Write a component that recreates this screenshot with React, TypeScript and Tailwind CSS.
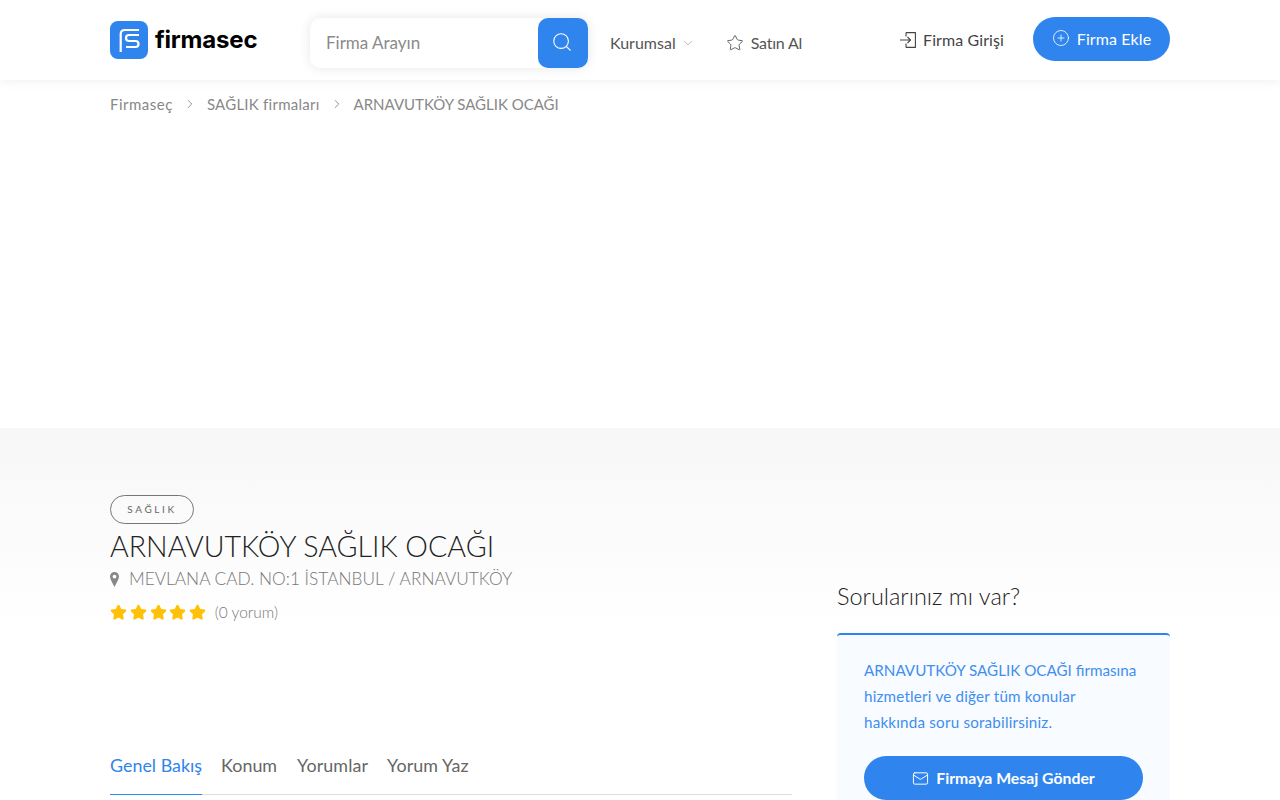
import { ChevronDown, ChevronRight, Mail, Search, Star, CirclePlus } from 'lucide-react';

const font = "font-['Lato','Open_Sans',sans-serif]";

function Logo() {
  return (
    <div className="flex w-[148px] shrink-0 items-center gap-[7px]">
      <div className="flex h-[38px] w-[38px] shrink-0 items-center justify-center rounded-[8px] bg-[#2f84ee]">
        <svg width="26" height="30" viewBox="0 0 26 30" fill="none" stroke="white" strokeWidth="2.2">
          <path d="M4.7 27V9C4.7 6.5 6.5 5 9 5H23" />
          <path d="M23 10H13C11 10 10 11.5 10 13C10 15 11 16 13 16H19.5C21.5 16 22.5 17.5 22.5 19C22.5 20.5 21.5 22 19.5 22H10" />
        </svg>
      </div>
      <span className="font-['Inter',sans-serif] text-[24px] font-bold leading-none tracking-[-0.2px] text-black">firmasec</span>
    </div>
  );
}

function Header() {
  return (
    <header className="relative z-10 h-20 bg-white shadow-[0_2px_10px_rgba(0,0,0,0.06)]">
      <div className="mx-auto flex h-full w-[1060px] items-center">
        <Logo />
        <div className="ml-[52px] mt-[6px] flex h-[50px] w-[278px] items-center rounded-[10px] bg-white shadow-[0_0_12px_rgba(0,0,0,0.1)]">
          <span className="flex-1 pl-4 text-[17px] text-[#8a8a8a]">Firma Arayın</span>
          <button className="flex h-[50px] w-[50px] items-center justify-center rounded-[10px] bg-[#2f84ee] pb-[3px] pr-[3px] text-white">
            <Search size={22} strokeWidth={1.2} />
          </button>
        </div>
        <nav className="ml-[22px] mt-[6px] flex items-center text-[16px] text-[#555]">
          <span>Kurumsal</span>
          <ChevronDown size={14} strokeWidth={1.2} className="ml-[5px] text-[#999]" />
          <Star size={18} strokeWidth={1.2} className="ml-[31px]" />
          <span className="ml-[7px] tracking-[-0.2px]">Satın Al</span>
        </nav>
        <div className="ml-auto flex items-center text-[#444]">
          <div className="flex items-center gap-[7px] text-[16px] tracking-[0.1px]">
            <svg width="16" height="16" viewBox="0 0 16 16" fill="none" stroke="currentColor" strokeWidth="1.1">
              <path d="M6 .6H15.4V15.4H6M6 4.5V.6M6 15.4V11.5M0 8H10.5M7.5 5L10.5 8L7.5 11" />
            </svg>
            <span>Firma Girişi</span>
          </div>
          <button className="mb-[2px] ml-[29px] flex h-11 w-[137px] items-center justify-center gap-[7px] rounded-[22px] bg-[#2f84ee] text-[16px] tracking-[0.1px] text-white">
            <CirclePlus size={18} strokeWidth={1.1} className="mb-[3px]" />
            Firma Ekle
          </button>
        </div>
      </div>
    </header>
  );
}

function Breadcrumb() {
  return (
    <div className="mx-auto flex h-12 w-[1060px] items-center text-[15px] text-[#888]">
      <span className="tracking-[0.5px]">Firmaseç</span>
      <ChevronRight size={14} strokeWidth={1.2} className="mx-[10px] text-[#666]" />
      <span className="tracking-[0.25px]">SAĞLIK firmaları</span>
      <ChevronRight size={14} strokeWidth={1.2} className="mx-[10px] text-[#666]" />
      <span>ARNAVUTKÖY SAĞLIK OCAĞI</span>
    </div>
  );
}

function CompanyInfo() {
  return (
    <div className="w-[682px] pt-[67px]">
      <span className="flex h-[29px] w-[84px] items-center justify-center rounded-[15px] border border-[#777] text-[10px] tracking-[2.6px] text-[#666]">SAĞLIK</span>
      <h1 className="mt-[5px] text-[28.6px] font-light leading-[34px] text-[#222]">ARNAVUTKÖY SAĞLIK OCAĞI</h1>
      <div className="mt-[2px] flex h-[28px] items-center text-[17.3px] font-light text-[#777]">
        <svg width="9" height="15" viewBox="0 0 9 15" className="mr-[10px]" fill="#888">
          <path fillRule="evenodd" d="M4.5 0C2 0 0 2 0 4.5C0 7 3 12 4.5 15C6 12 9 7 9 4.5C9 2 7 0 4.5 0ZM4.5 2.7A1.9 1.9 0 1 1 4.5 6.5A1.9 1.9 0 1 1 4.5 2.7Z" />
        </svg>
        <span>MEVLANA CAD. NO:1 İSTANBUL / ARNAVUTKÖY</span>
      </div>
      <div className="mt-[8px] flex items-center">
        {[0, 1, 2, 3, 4].map(i => (
          <Star key={i} size={17} fill="#ffc107" stroke="#ffc107" className="mr-[2.75px]" />
        ))}
        <span className="ml-[6px] text-[15.5px] font-light text-[#777]">(0 yorum)</span>
      </div>
      <div className="mt-[125px] flex border-b border-[#ddd] text-[17.9px] text-[#666]">
        <span className="-mb-px h-[46px] border-b border-[#2f84ee] pt-[4px] leading-[24px] text-[#2f84ee]">Genel Bakış</span>
        <span className="ml-[19px] pt-[4px] leading-[24px]">Konum</span>
        <span className="ml-[20px] pt-[4px] leading-[24px] tracking-[0.1px]">Yorumlar</span>
        <span className="ml-[19px] pt-[4px] leading-[24px] tracking-[0.1px]">Yorum Yaz</span>
      </div>
    </div>
  );
}

function QuestionCard() {
  return (
    <aside className="w-[333px] pt-[153px]">
      <h2 className="text-[23.5px] font-light leading-[30px] text-[#222]">Sorularınız mı var?</h2>
      <div className="mt-[22px] h-[300px] rounded-t-[4px] border-t-2 border-[#2f84ee] bg-[#f8fbff] px-[27px] pt-[22px]">
        <p className="text-[15.2px] leading-[26px] text-[#3f8ef0]">
          ARNAVUTKÖY SAĞLIK OCAĞI firmasına<br />
          <span className="tracking-[0.2px]">hizmetleri ve diğer tüm konular<br />hakkında soru sorabilirsiniz.</span>
        </p>
        <button className="mt-[21px] flex h-11 w-full items-center justify-center gap-[7px] rounded-[22px] bg-[#2f84ee] text-[15.8px] font-bold text-white">
          <Mail size={17} strokeWidth={1.4} />
          Firmaya Mesaj Gönder
        </button>
      </div>
    </aside>
  );
}

export default function App() {
  return (
    <div className={`${font} h-[800px] overflow-hidden bg-white`}>
      <Header />
      <Breadcrumb />
      <div className="h-[300px]" />
      <section className="bg-[linear-gradient(#f7f7f7,#ffffff_200px)]">
        <div className="mx-auto flex w-[1060px] justify-between">
          <CompanyInfo />
          <QuestionCard />
        </div>
      </section>
    </div>
  );
}
